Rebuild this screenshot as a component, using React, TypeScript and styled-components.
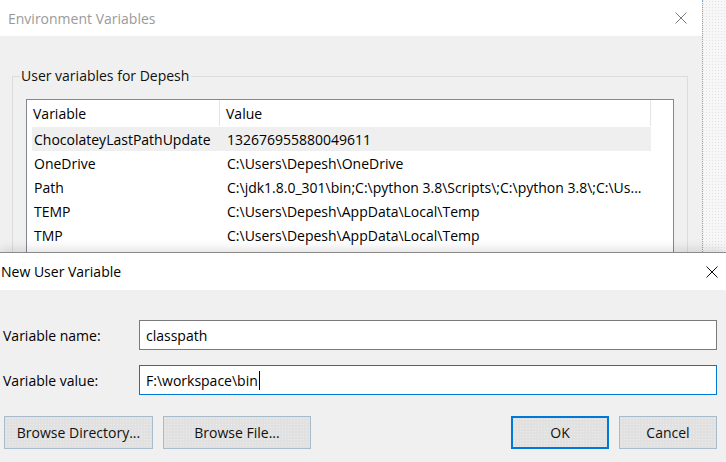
import * as React from 'react';
import styled, { createGlobalStyle } from 'styled-components';

const GlobalStyle = createGlobalStyle`
  html, body {
    margin: 0;
    padding: 0;
  }
  body {
    font-family: "Open Sans", "Noto Sans", sans-serif;
    font-size: 14px;
    color: #000;
    overflow: hidden;
  }
`;

const rows = [
  { name: 'ChocolateyLastPathUpdate', value: '132676955880049611', selected: true },
  { name: 'OneDrive', value: 'C:\\Users\\Depesh\\OneDrive' },
  { name: 'Path', value: 'C:\\jdk1.8.0_301\\bin;C:\\python 3.8\\Scripts\\;C:\\python 3.8\\;C:\\Us...' },
  { name: 'TEMP', value: 'C:\\Users\\Depesh\\AppData\\Local\\Temp' },
  { name: 'TMP', value: 'C:\\Users\\Depesh\\AppData\\Local\\Temp' },
];

const CloseIcon = ({ stroke }: { stroke: string }) => (
  <svg width="12" height="12" viewBox="0 0 12 12">
    <path d="M0.5 0.5 L11.5 11.5 M11.5 0.5 L0.5 11.5" stroke={stroke} strokeWidth="1" fill="none" />
  </svg>
);

export default function App() {
  return (
    <>
      <GlobalStyle />
      <Desktop>
        <BackWindow>
          <TitleBar height={36}>
            <TitleText inactive>Environment Variables</TitleText>
            <CloseButton right={15}>
              <CloseIcon stroke="#7a7a7a" />
            </CloseButton>
          </TitleBar>
          <BackBody>
            <Group>
              <Legend>User variables for Depesh</Legend>
              <ListBox>
                <Header>
                  <HeadCell width={193}>Variable</HeadCell>
                  <HeadCell width={431}>Value</HeadCell>
                </Header>
                {rows.map((row, index) => (
                  <Row key={index} selected={!!row.selected}>
                    <NameCell>{row.name}</NameCell>
                    <ValueCell>{row.value}</ValueCell>
                  </Row>
                ))}
              </ListBox>
            </Group>
          </BackBody>
        </BackWindow>

        <Dialog>
          <TitleBar height={37}>
            <TitleText style={{ paddingLeft: 1 }}>New User Variable</TitleText>
            <CloseButton right={8}>
              <CloseIcon stroke="#111" />
            </CloseButton>
          </TitleBar>
          <DialogBody>
            <FieldRow>
              <Label>Variable name:</Label>
              <Input>classpath</Input>
            </FieldRow>
            <FieldRow>
              <Label>Variable value:</Label>
              <Input focused>
                F:\workspace\bin<Caret />
              </Input>
            </FieldRow>
            <ButtonRow>
              <Button width={149}>Browse Directory...</Button>
              <Button width={148}>Browse File...</Button>
              <Spacer />
              <Button width={98} primary>OK</Button>
              <Button width={98}>Cancel</Button>
            </ButtonRow>
          </DialogBody>
        </Dialog>
      </Desktop>
    </>
  );
}

const Desktop = styled.div`
  position: relative;
  width: 726px;
  height: 462px;
  overflow: hidden;
  background-color: #f7f7f7;
  background-image: radial-gradient(#e4e4e4 0.6px, transparent 0.8px);
  background-size: 3px 3px;
`;

const BackWindow = styled.div`
  position: absolute;
  left: 0;
  top: 0;
  width: 702px;
  height: 470px;
  border-right: 1px dotted #7fa7c4;
  background: #f0f0f0;
  display: flex;
  flex-direction: column;
`;

const TitleBar = styled.div<{ height: number }>`
  position: relative;
  flex: 0 0 ${(p) => p.height}px;
  height: ${(p) => p.height}px;
  display: flex;
  align-items: center;
  background: #fff;
`;

const TitleText = styled.span<{ inactive?: boolean }>`
  padding-left: 8px;
  font-size: 14px;
  color: ${(p) => (p.inactive ? '#9a9a9a' : '#000')};
`;

const CloseButton = styled.div<{ right: number }>`
  position: absolute;
  right: ${(p) => p.right}px;
  top: 50%;
  transform: translateY(-50%);
  width: 12px;
  height: 12px;
  display: flex;
`;

const BackBody = styled.div`
  flex: 1;
  padding: 30px 14px 0 12px;
`;

const Group = styled.fieldset`
  margin: 0;
  padding: 13px 13px 20px 13px;
  border: 1px solid #dcdcdc;
  min-width: 0;
`;

const Legend = styled.legend`
  margin-left: -6px;
  padding: 0 2px 0 1px;
  line-height: 20px;
  font-size: 14px;
  color: #111;
`;

const ListBox = styled.div`
  border: 1px solid #828790;
  background: #fff;
  height: 180px;
`;

const Header = styled.div`
  display: flex;
  height: 26px;
  margin-bottom: 1px;
`;

const HeadCell = styled.div<{ width: number }>`
  flex: 0 0 ${(p) => p.width}px;
  display: flex;
  align-items: center;
  padding-left: 6px;
  box-sizing: border-box;
  border-right: 1px solid #e5e5e5;
`;

const Row = styled.div<{ selected: boolean }>`
  display: flex;
  align-items: center;
  height: 24px;
  width: 619px;
  margin-left: 5px;
  background: ${(p) => (p.selected ? '#efefef' : 'transparent')};
`;

const NameCell = styled.div`
  flex: 0 0 188px;
  padding-left: 2px;
  box-sizing: border-box;
`;

const ValueCell = styled.div`
  flex: 1;
  padding-left: 7px;
  white-space: nowrap;
  overflow: hidden;
`;

const Dialog = styled.div`
  position: absolute;
  left: 0;
  top: 252px;
  width: 726px;
  height: 220px;
  border-top: 1px solid #8a8a8a;
  background: #f0f0f0;
  box-shadow: 0 -3px 10px rgba(0, 0, 0, 0.12);
  display: flex;
  flex-direction: column;
`;

const DialogBody = styled.div`
  padding: 30px 9px 0 3px;
  display: flex;
  flex-direction: column;
  gap: 15px;
`;

const FieldRow = styled.div`
  display: flex;
  align-items: center;
`;

const Label = styled.div`
  flex: 0 0 136px;
`;

const Input = styled.div<{ focused?: boolean }>`
  flex: 1;
  height: 30px;
  box-sizing: border-box;
  display: flex;
  align-items: center;
  padding-left: 6px;
  background: #fff;
  border: 1px solid ${(p) => (p.focused ? '#0078d7' : '#7a7a7a')};
`;

const Caret = styled.span`
  display: inline-block;
  width: 1px;
  height: 19px;
  margin-left: 1px;
  background: #000;
`;

const ButtonRow = styled.div`
  display: flex;
  gap: 10px;
  margin-top: 6px;
  padding-left: 1px;
`;

const Spacer = styled.div`
  flex: 1;
`;

const Button = styled.div<{ width: number; primary?: boolean }>`
  flex: 0 0 ${(p) => p.width}px;
  height: 33px;
  box-sizing: border-box;
  display: flex;
  align-items: center;
  justify-content: center;
  background-color: #e1e1e1;
  background-image: radial-gradient(#ececec 0.6px, transparent 0.8px);
  background-size: 3px 3px;
  border: ${(p) => (p.primary ? '2px solid #0078d7' : '1px solid #a9bccc')};
  color: #111;
`;
